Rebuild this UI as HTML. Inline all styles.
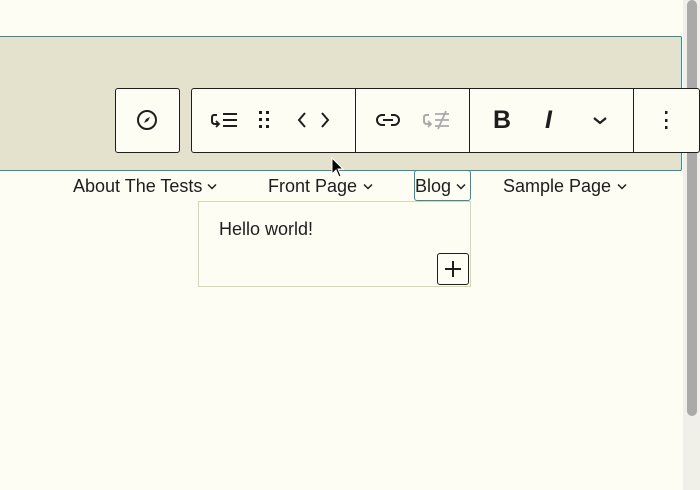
<!DOCTYPE html>
<html><head><style>
body{margin:0;width:700px;height:490px;background:#fdfdf3;font-family:"Liberation Sans",sans-serif;position:relative;overflow:hidden;color:#1e1e1e}
.band{position:absolute;left:-2px;top:36px;width:682px;height:133px;background:#e4e2cd;border:1px solid #2f8fa0;border-radius:2px}
.box{position:absolute;background:#fdfdf3;border:1px solid #1e1e1e;border-radius:3px;box-sizing:border-box}
.div{position:absolute;top:88px;width:1px;height:65px;background:#1e1e1e}
svg{position:absolute}
.nav{position:absolute;top:176px;font-size:18px;white-space:nowrap}
.nav i{display:inline-block;width:10px;height:8px;margin-left:4px;vertical-align:2px;background:none}
.track{position:absolute;left:683px;top:0;width:17px;height:490px;background:#f0f0e8}
.thumb{position:absolute;left:687px;top:0;width:10px;height:416px;background:#aaa;border-radius:5px}
</style></head><body>
<div class="track"></div><div class="thumb"></div>
<div class="band"></div>
<div class="box" style="left:115px;top:88px;width:65px;height:65px"></div>
<div class="box" style="left:191px;top:88px;width:509px;height:65px"></div>
<div class="div" style="left:355px"></div>
<div class="div" style="left:469px"></div>
<div class="div" style="left:633px"></div>
<svg style="left:135px;top:108px" width="24" height="24" viewBox="0 0 24 24"><circle cx="12" cy="12" r="9" fill="none" stroke="#1e1e1e" stroke-width="2"/><path d="M9 15 L11 11 L15 9 L13 13 Z" fill="#1e1e1e"/></svg>
<svg style="left:208px;top:108px" width="32" height="24" viewBox="0 0 32 24"><path d="M9 7 H6 Q4 7 4 10 V13 Q4 16 7 16 H10" fill="none" stroke="#1e1e1e" stroke-width="2"/><path d="M8 13 L11 16 L8 19" fill="none" stroke="#1e1e1e" stroke-width="1.8"/><path d="M15 6H29M15 12H29M15 18H29" stroke="#1e1e1e" stroke-width="2"/></svg>
<svg style="left:255px;top:108px" width="20" height="24" viewBox="0 0 20 24"><g fill="#1e1e1e"><rect x="4" y="3" width="3" height="3"/><rect x="11" y="3" width="3" height="3"/><rect x="4" y="10" width="3" height="3"/><rect x="11" y="10" width="3" height="3"/><rect x="4" y="17" width="3" height="3"/><rect x="11" y="17" width="3" height="3"/></g></svg>
<svg style="left:296px;top:108px" width="36" height="24" viewBox="0 0 36 24"><path d="M9 5 L3 12 L9 19 M26 5 L32 12 L26 19" fill="none" stroke="#1e1e1e" stroke-width="2"/></svg>
<svg style="left:374px;top:108px" width="28" height="24" viewBox="0 0 28 24"><path d="M11 7H8a5 5 0 0 0 0 10h3M17 7h3a5 5 0 0 1 0 10h-3M9 12h10" fill="none" stroke="#1e1e1e" stroke-width="2"/></svg>
<svg style="left:420px;top:108px" width="32" height="24" viewBox="0 0 32 24"><path d="M9 7 H6 Q4 7 4 10 V13 Q4 16 7 16 H10" fill="none" stroke="#aaa" stroke-width="2"/><path d="M8 13 L11 16 L8 19" fill="none" stroke="#aaa" stroke-width="1.8"/><path d="M15 6H29M15 12H29M15 18H29M26 3L18 21" stroke="#aaa" stroke-width="1.8"/></svg>
<div style="position:absolute;left:493px;top:106px;font-size:25px;font-weight:bold">B</div>
<div style="position:absolute;left:545px;top:106px;font-size:25px;font-style:italic;font-weight:bold">I</div>
<svg style="left:590px;top:110px" width="20" height="20" viewBox="0 0 20 20"><path d="M4 8 L10 13 L16 8" fill="none" stroke="#1e1e1e" stroke-width="2.2"/></svg>
<svg style="left:656px;top:108px" width="20" height="24" viewBox="0 0 20 24"><g fill="#1e1e1e"><rect x="9" y="3" width="2.5" height="3"/><rect x="9" y="11" width="2.5" height="3"/><rect x="9" y="18" width="2.5" height="3"/></g></svg>
<svg style="left:331px;top:157px" width="14" height="22" viewBox="0 0 14 22"><path d="M1 1 L1 17 L5 13 L8 20 L10 19 L7 12 L12 12 Z" fill="#000" stroke="#fff" stroke-width="1"/></svg>
<div class="nav" style="left:73px">About The Tests<svg style="position:static;margin-left:5px;vertical-align:2px" width="10" height="7" viewBox="0 0 10 7"><path d="M1 1.5L5 5.5L9 1.5" fill="none" stroke="#1e1e1e" stroke-width="1.5"/></svg></div>
<div class="nav" style="left:268px">Front Page<svg style="position:static;margin-left:6px;vertical-align:2px" width="10" height="7" viewBox="0 0 10 7"><path d="M1 1.5L5 5.5L9 1.5" fill="none" stroke="#1e1e1e" stroke-width="1.5"/></svg></div>
<div style="position:absolute;left:414px;top:170px;width:57px;height:31px;border:1.5px solid #2f8fa0;border-radius:3px;box-sizing:border-box"></div>
<div class="nav" style="left:415px">Blog<svg style="position:static;margin-left:5px;vertical-align:2px" width="10" height="7" viewBox="0 0 10 7"><path d="M1 1.5L5 5.5L9 1.5" fill="none" stroke="#1e1e1e" stroke-width="1.5"/></svg></div>
<div class="nav" style="left:503px">Sample Page<svg style="position:static;margin-left:6px;vertical-align:2px" width="10" height="7" viewBox="0 0 10 7"><path d="M1 1.5L5 5.5L9 1.5" fill="none" stroke="#1e1e1e" stroke-width="1.5"/></svg></div>
<div style="position:absolute;left:198px;top:201px;width:273px;height:86px;border:1px solid #d8d8b0;box-sizing:border-box;background:#fdfdf3"></div>
<div style="position:absolute;left:219px;top:219px;font-size:18px">Hello world!</div>
<div style="position:absolute;left:437px;top:253px;width:32px;height:32px;border:1.5px solid #1e1e1e;border-radius:3px;box-sizing:border-box;background:#fdfdf3"></div>
<svg style="left:443px;top:259px" width="20" height="20" viewBox="0 0 20 20"><path d="M10 2V18M2 10H18" stroke="#1e1e1e" stroke-width="2"/></svg>
</body></html>
